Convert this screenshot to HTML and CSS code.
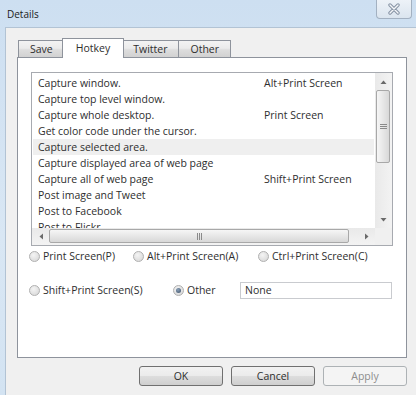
FILE: index.html
```html
<!DOCTYPE html>
<html>
<head>
<meta name="viewport" content="width=device-width, initial-scale=1">
<link rel="stylesheet" href="styles.css">
</head>
<body>

<div class="window">
  <div class="titlebar">
    <span class="title">Details</span>
    <div class="close">
      <svg width="14" height="12" viewBox="0 0 14 12">
        <path d="M3 2 L11 10 M11 2 L3 10" stroke="#8693a4" stroke-width="3.4" stroke-linecap="round"/>
        <path d="M3 2 L11 10 M11 2 L3 10" stroke="#f4f6f9" stroke-width="1.4" stroke-linecap="round"/>
      </svg>
    </div>
  </div>

  <div class="client">
    <div class="tabs">
      <div class="tab">Save</div>
      <div class="tab active">Hotkey</div>
      <div class="tab">Twitter</div>
      <div class="tab">Other</div>
    </div>

    <div class="panel">
      <div class="listbox">
        <ul class="rows">
          <li class="row"><span>Capture window.</span><span>Alt+Print Screen</span></li>
          <li class="row"><span>Capture top level window.</span><span></span></li>
          <li class="row"><span>Capture whole desktop.</span><span>Print Screen</span></li>
          <li class="row"><span>Get color code under the cursor.</span><span></span></li>
          <li class="row selected"><span>Capture selected area.</span><span></span></li>
          <li class="row"><span>Capture displayed area of web page</span><span></span></li>
          <li class="row"><span>Capture all of web page</span><span>Shift+Print Screen</span></li>
          <li class="row"><span>Post image and Tweet</span><span></span></li>
          <li class="row"><span>Post to Facebook</span><span></span></li>
          <li class="row"><span>Post to Flickr</span><span></span></li>
        </ul>

        <div class="vscroll">
          <div class="arrow"><svg width="7" height="4"><path d="M0.5 4 L3.5 0.5 L6.5 4 Z" fill="#6a6a6a"/></svg></div>
          <div class="thumb v">
            <svg width="7" height="7"><path d="M0 1.5 H7 M0 3.5 H7 M0 5.5 H7" stroke="#8a8a8a" stroke-width="1"/></svg>
          </div>
          <div class="track"></div>
          <div class="arrow"><svg width="7" height="4"><path d="M0.5 0 L3.5 3.5 L6.5 0 Z" fill="#6a6a6a"/></svg></div>
        </div>

        <div class="hscroll">
          <div class="arrow"><svg width="4" height="7"><path d="M4 0.5 L0.5 3.5 L4 6.5 Z" fill="#6a6a6a"/></svg></div>
          <div class="thumb h">
            <svg width="7" height="7"><path d="M1.5 0 V7 M3.5 0 V7 M5.5 0 V7" stroke="#8a8a8a" stroke-width="1"/></svg>
          </div>
          <div class="track"></div>
          <div class="arrow"><svg width="4" height="7"><path d="M0 0.5 L3.5 3.5 L0 6.5 Z" fill="#6a6a6a"/></svg></div>
        </div>

        <div class="corner"></div>
      </div>

      <div class="radio-row first">
        <label class="radio"><span class="dot"></span>Print Screen(P)</label>
        <label class="radio"><span class="dot"></span>Alt+Print Screen(A)</label>
        <label class="radio"><span class="dot"></span>Ctrl+Print Screen(C)</label>
      </div>
      <div class="radio-row second">
        <label class="radio"><span class="dot"></span>Shift+Print Screen(S)</label>
        <label class="radio"><span class="dot checked"></span>Other</label>
        <div class="textbox">None</div>
      </div>
    </div>

    <div class="buttons">
      <div class="btn">OK</div>
      <div class="btn">Cancel</div>
      <div class="btn disabled">Apply</div>
    </div>
  </div>
</div>

</body>
</html>
```

FILE: styles.css
```css
/* basic setup */
* {box-sizing: border-box;}

body {
  margin: 0;
  width: 416px;
  height: 395px;
  overflow: hidden;
  font-family: "Segoe UI", "Open Sans", sans-serif;
  font-size: 10.5px;
  color: #2e2e2e;
  background: #f0f0f0;
}

/* window frame */
.window {
  display: flex;
  flex-direction: column;
  height: 395px;
  background: linear-gradient(to bottom, #cddff1 0%, #d9e7f4 60%, #d3e3f2 100%);
}

.titlebar {
  display: flex;
  align-items: flex-start;
  height: 27px;
  padding-left: 7px;
}
.title {
  margin-top: 7px;
  font-size: 10px;
  color: #202020;
}
.close {
  display: flex;
  align-items: center;
  justify-content: center;
  margin-left: auto;
  margin-right: 4px;
  width: 36px;
  height: 19px;
  border: 1px solid #a3b1c1;
  border-top: none;
  border-radius: 0 0 4px 4px;
  background: linear-gradient(to bottom, #edf2f8, #dbe5ef);
}

.client {
  flex: 1;
  margin-left: 5px;
  padding: 10px 9px 0 11px;
  border-left: 1px solid #b2c3d4;
  border-top: 1px solid #b2c3d4;
  background: #f0f0f0;
}

/* tabs */
.tabs {
  display: flex;
  align-items: flex-end;
  height: 19px;
  padding-left: 1px;
}
.tab {
  height: 17px;
  padding: 0 11px;
  line-height: 16px;
  border: 1px solid #8e939c;
  border-bottom: none;
  border-right: none;
  background: linear-gradient(to bottom, #f3f3f3 0%, #ebebeb 45%, #dddddd 55%, #d2d2d2 100%);
}
.tab:nth-child(4) {
  border-right: 1px solid #8e939c;
}
.tab.active {
  position: relative;
  z-index: 1;
  height: 20px;
  margin: 0 -2px -1px -2px;
  padding: 0 13px;
  line-height: 18px;
  border-right: 1px solid #8e939c;
  background: #fff;
}
.tab.active + .tab {
  border-left: none;
}

.panel {
  height: 301px;
  padding: 14px 13px 0 13px;
  border: 1px solid #8e939c;
  background: #fff;
}

/* list */
.listbox {
  display: grid;
  grid-template-columns: 1fr 17px;
  grid-template-rows: 1fr 17px;
  width: 362px;
  height: 174px;
  border: 1px solid #a7aab0;
  background: #fff;
}
.rows {
  margin: 0;
  padding: 2px 0 0 0;
  list-style: none;
  overflow: hidden;
}
.row {
  display: grid;
  grid-template-columns: 226px 1fr;
  height: 16px;
  margin: 0 1px;
  padding-left: 5px;
  line-height: 16px;
  white-space: nowrap;
}
.row.selected {
  background: #efefef;
}

.vscroll, .hscroll {
  display: flex;
  background: linear-gradient(to right, #e9e9e9, #f3f3f3);
}
.vscroll {
  flex-direction: column;
}
.hscroll {
  background: linear-gradient(to bottom, #e9e9e9, #f3f3f3);
}
.arrow {
  display: flex;
  align-items: center;
  justify-content: center;
  width: 17px;
  height: 17px;
  flex: none;
}
.track {
  flex: 1;
}
.thumb {
  display: flex;
  align-items: center;
  justify-content: center;
  border: 1px solid #a8a8a8;
  border-radius: 2px;
}
.thumb.v {
  height: 73px;
  margin: 0 2px 0 1px;
  background: linear-gradient(to right, #f6f6f6, #e4e4e4 60%, #d8d8d8);
}
.thumb.h {
  width: 300px;
  margin: 1px 0 2px 0;
  background: linear-gradient(to bottom, #f6f6f6, #e4e4e4 60%, #d8d8d8);
}
.corner {
  background: #f0f0f0;
}

/* radio buttons */
.radio-row {
  display: grid;
  align-items: center;
  height: 18px;
  margin-left: -2px;
}
.radio-row.first {
  grid-template-columns: 104px 125px auto;
  margin-top: 1px;
}
.radio-row.second {
  grid-template-columns: 144px 67px 152px;
  margin-top: 16px;
}
.radio {
  display: flex;
  align-items: center;
  gap: 3px;
  white-space: nowrap;
}
.dot {
  display: flex;
  align-items: center;
  justify-content: center;
  width: 11px;
  height: 11px;
  border: 1px solid #b0b0b0;
  border-radius: 50%;
  background: radial-gradient(circle at 40% 35%, #f4f4f4, #d4d4d4);
}
.dot.checked::after {
  content: "";
  width: 5px;
  height: 5px;
  border-radius: 50%;
  background: radial-gradient(circle at 40% 35%, #8aa0b8, #3d4f66);
}
.textbox {
  height: 17px;
  padding-left: 4px;
  line-height: 15px;
  border: 1px solid #c9cbcf;
  background: #fff;
}

/* dialog buttons */
.buttons {
  display: flex;
  justify-content: flex-end;
  gap: 8px;
  margin-top: 8px;
}
.btn {
  width: 84px;
  height: 20px;
  line-height: 18px;
  text-align: center;
  border: 1px solid #707070;
  border-radius: 3px;
  background: linear-gradient(to bottom, #f2f2f2 0%, #ebebeb 48%, #dddddd 52%, #cfcfcf 100%);
}
.btn.disabled {
  color: #8d8d8d;
  border-color: #adb2b5;
  background: #f4f4f4;
}
```
